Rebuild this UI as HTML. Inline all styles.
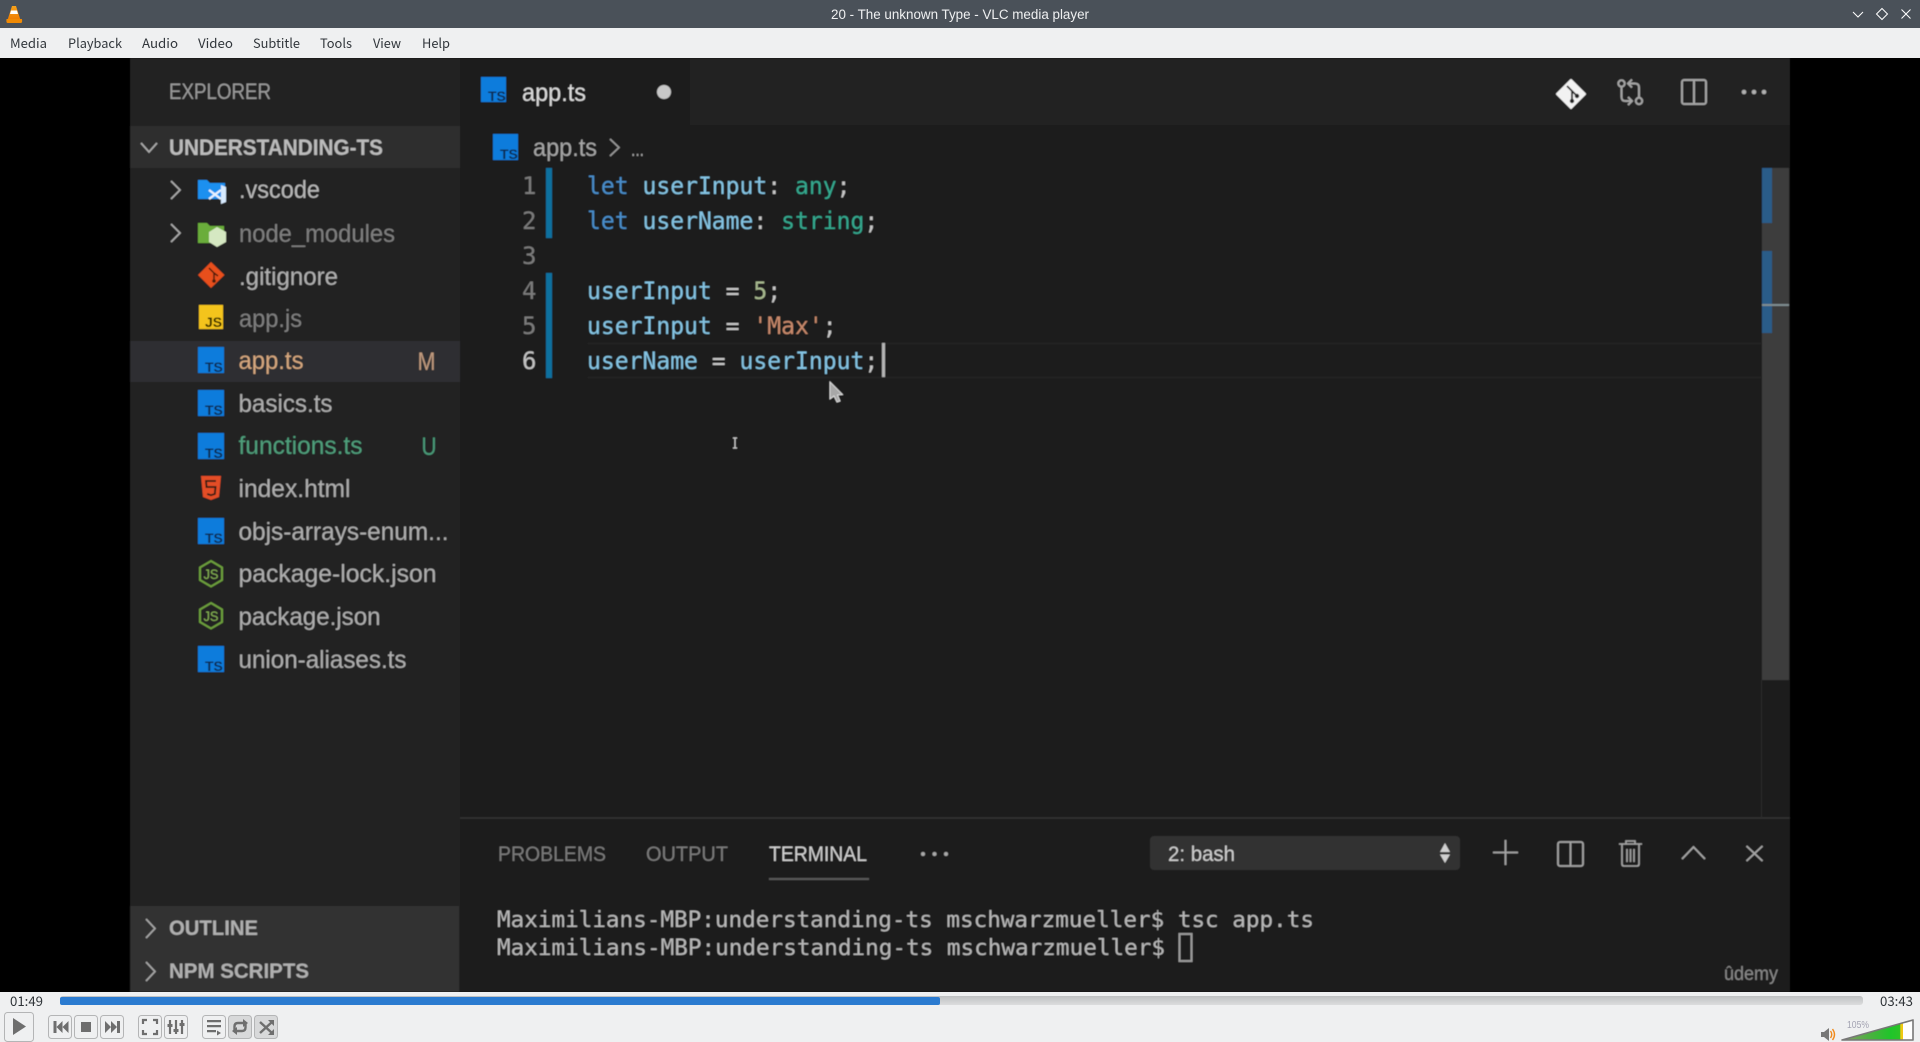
<!DOCTYPE html>
<html><head><meta charset="utf-8"><title>20 - The unknown Type - VLC media player</title>
<style>html,body{margin:0;padding:0;background:#eff0f1;width:1920px;height:1042px;overflow:hidden}svg{display:block}
.s{font-family:"Liberation Sans",sans-serif}.m{font-family:"DejaVu Sans Mono","Liberation Mono",monospace}.n{font-family:"Noto Sans CJK SC","Liberation Sans",sans-serif}</style></head>
<body>
<svg width="1920" height="1042" viewBox="0 0 1920 1042" xmlns="http://www.w3.org/2000/svg">
<defs>
<filter id="b" filterUnits="userSpaceOnUse" x="0" y="58" width="1920" height="934"><feGaussianBlur stdDeviation="0.6"/></filter>
<linearGradient id="seek" x1="0" y1="0" x2="0" y2="1"><stop offset="0" stop-color="#bfc1c2"/><stop offset="1" stop-color="#dcddde"/></linearGradient>
<linearGradient id="vol" x1="0" y1="0" x2="1" y2="0"><stop offset="0" stop-color="#8a9a6a"/><stop offset=".45" stop-color="#4cb040"/><stop offset=".8" stop-color="#1fc52a"/><stop offset=".95" stop-color="#2cc426"/><stop offset=".96" stop-color="#e8c818"/><stop offset="1" stop-color="#f2c810"/></linearGradient>
<linearGradient id="cone" x1="0" y1="0" x2="0" y2="1"><stop offset="0" stop-color="#f7a21b"/><stop offset="1" stop-color="#ef7c00"/></linearGradient>
</defs>
<rect width="1920" height="1042" fill="#eff0f1"/>
<rect width="1920" height="28" fill="#4a5159"/>
<!-- VLC cone -->
<path d="M12 6h4l4.500 14H7.500z" fill="url(#cone)"/><path d="M11 10.500h6l1 3.500H10z" fill="#fff"/><path d="M6.500 19h15.500q.5 4-1 4H7.500q-1.500 0-1-4z" fill="#f08a05"/>
<text class="s" x="831" y="19" font-size="13.500" fill="#eff0f1" textLength="258" lengthAdjust="spacingAndGlyphs">20 - The unknown Type - VLC media player</text>
<path d="M1853 12l5 5 5-5" fill="none" stroke="#fff" stroke-width="1"/>
<path d="M1882 8.500l5.500 5.500-5.500 5.500-5.500-5.500z" fill="none" stroke="#fff" stroke-width="1"/>
<path d="M1901.500 9.500l9 9M1910.500 9.500l-9 9" stroke="#fff" stroke-width="1"/>
<!-- Menu -->
<g class="n" font-size="13" fill="#31363b">
<text x="10" y="48" textLength="37" lengthAdjust="spacingAndGlyphs">Media</text>
<text x="68" y="48" textLength="54" lengthAdjust="spacingAndGlyphs">Playback</text>
<text x="142" y="48" textLength="36" lengthAdjust="spacingAndGlyphs">Audio</text>
<text x="198" y="48" textLength="35" lengthAdjust="spacingAndGlyphs">Video</text>
<text x="253" y="48" textLength="47" lengthAdjust="spacingAndGlyphs">Subtitle</text>
<text x="320" y="48" textLength="32" lengthAdjust="spacingAndGlyphs">Tools</text>
<text x="373" y="48" textLength="28" lengthAdjust="spacingAndGlyphs">View</text>
<text x="422" y="48" textLength="28" lengthAdjust="spacingAndGlyphs">Help</text>
</g>
<!-- Video -->
<rect x="0" y="58" width="1920" height="934" fill="#000"/>
<g filter="url(#b)">
<rect x="130" y="58" width="330" height="934" fill="#212121"/>
<rect x="460" y="58" width="1330" height="934" fill="#1c1c1c"/>
<rect x="460" y="58" width="1330" height="67" fill="#222"/>
<rect x="460" y="58" width="230" height="67" fill="#1c1c1c"/>
<rect x="130" y="126" width="330" height="42" fill="#2f2f2f"/>
<rect x="130" y="341" width="330" height="41" fill="#2d2d30"/>
<rect x="130" y="906" width="329" height="86" fill="#333"/>
<text class="s" x="169" y="99" font-size="22" fill="#9a9a9a" textLength="102" lengthAdjust="spacingAndGlyphs">EXPLORER</text>
<path d="M141 143l8 9 8-9" fill="none" stroke="#aaa" stroke-width="1.700"/>
<text class="s" x="169" y="155" font-size="22" font-weight="bold" fill="#bcbcbc" textLength="214" lengthAdjust="spacingAndGlyphs">UNDERSTANDING-TS</text>
<!-- Tree chevrons -->
<path d="M171 181l9 9-9 9M171 224l9 9-9 9" fill="none" stroke="#aaa" stroke-width="1.700"/>
<!-- vscode folder -->
<path d="M198 180h9l3 3h15v16h-27z" fill="#1c90f0"/><path d="M209 190l12 9M209 199l12-9" stroke="#e8f3ff" stroke-width="2.200" fill="none"/><path d="M221 185l5 2v15l-5 2z" fill="#d8ebff"/>
<text class="s" x="239" y="198" font-size="25" fill="#b8b8b8" textLength="81" lengthAdjust="spacingAndGlyphs">.vscode</text>
<!-- node folder -->
<path d="M198 223h9l3 3h14v17h-26z" fill="#6aad3a"/><path d="M217 227l9 5v10l-9 5-8-5v-10z" fill="#d5e8c2"/>
<text class="s" x="239" y="242" font-size="25" fill="#7f7f7f" textLength="156" lengthAdjust="spacingAndGlyphs">node_modules</text>
<!-- git -->
<path d="M211 262l13.500 13-13.500 13-13-13z" fill="#e8501e"/><path d="M209 268l5 5v7M214 273l4 3" stroke="#4a1a08" stroke-width="1.500" fill="none"/><circle cx="214" cy="281" r="1.800" fill="#4a1a08"/>
<text class="s" x="239" y="285" font-size="25" fill="#b0b0b0" textLength="99" lengthAdjust="spacingAndGlyphs">.gitignore</text>
<!-- js -->
<rect x="199" y="305" width="24" height="24" fill="#f4c41a"/><text class="s" x="205" y="327" font-size="14" font-weight="bold" fill="#2e2604">JS</text>
<text class="s" x="239" y="327" font-size="25" fill="#7f7f7f" textLength="63" lengthAdjust="spacingAndGlyphs">app.js</text>
<!-- ts rows -->
<g>
<rect x="198" y="347" width="26" height="26" fill="#0c7bdc"/><text class="s" x="205" y="372" font-size="14" font-weight="bold" fill="#0a2c50">TS</text>
<rect x="198" y="390" width="26" height="26" fill="#0c7bdc"/><text class="s" x="205" y="415" font-size="14" font-weight="bold" fill="#0a2c50">TS</text>
<rect x="198" y="433" width="26" height="26" fill="#0c7bdc"/><text class="s" x="205" y="458" font-size="14" font-weight="bold" fill="#0a2c50">TS</text>
<rect x="198" y="518" width="26" height="26" fill="#0c7bdc"/><text class="s" x="205" y="543" font-size="14" font-weight="bold" fill="#0a2c50">TS</text>
<rect x="198" y="646" width="26" height="26" fill="#0c7bdc"/><text class="s" x="205" y="671" font-size="14" font-weight="bold" fill="#0a2c50">TS</text>
</g>
<g class="s" font-size="25">
<text x="238.500" y="369" fill="#d6a77f" textLength="65" lengthAdjust="spacingAndGlyphs">app.ts</text>
<text x="417.500" y="370" fill="#c09a7e" textLength="18" lengthAdjust="spacingAndGlyphs">M</text>
<text x="238.500" y="412" fill="#aeaeae" textLength="94" lengthAdjust="spacingAndGlyphs">basics.ts</text>
<text x="238.500" y="454" fill="#4f9f7c" textLength="124" lengthAdjust="spacingAndGlyphs">functions.ts</text>
<text x="421.500" y="455" fill="#4a9a78" textLength="15" lengthAdjust="spacingAndGlyphs">U</text>
<text x="238.500" y="497" fill="#aeaeae" textLength="112" lengthAdjust="spacingAndGlyphs">index.html</text>
<text x="238.500" y="540" fill="#aeaeae" textLength="210" lengthAdjust="spacingAndGlyphs">objs-arrays-enum...</text>
<text x="238.500" y="582" fill="#aeaeae" textLength="198" lengthAdjust="spacingAndGlyphs">package-lock.json</text>
<text x="238.500" y="625" fill="#aeaeae" textLength="142" lengthAdjust="spacingAndGlyphs">package.json</text>
<text x="238.500" y="668" fill="#aeaeae" textLength="168" lengthAdjust="spacingAndGlyphs">union-aliases.ts</text>
</g>
<!-- html5 -->
<path d="M201 476h20l-2 21-8 3-8-3z" fill="#e44d26"/><path d="M216 481h-10l.5 6h9l-.7 7-3.800 1.200-3.800-1.200" fill="none" stroke="#2a1a12" stroke-width="1.800"/>
<!-- node json -->
<path d="M211 561l11 6.500v12.500l-11 6.500-11-6.500v-12.500z" fill="none" stroke="#6d9f3c" stroke-width="2"/><text class="s" x="203.500" y="579" font-size="13.500" fill="#86b354" textLength="15" lengthAdjust="spacingAndGlyphs">JS</text>
<path d="M211 603l11 6.500v12.500l-11 6.500-11-6.500v-12.500z" fill="none" stroke="#6d9f3c" stroke-width="2"/><text class="s" x="203.500" y="621" font-size="13.500" fill="#86b354" textLength="15" lengthAdjust="spacingAndGlyphs">JS</text>
<!-- outline -->
<path d="M146 919l9 9.500-9 9.500M146 962l9 9.500-9 9.500" fill="none" stroke="#a5a5a5" stroke-width="1.700"/>
<text class="s" x="169" y="935" font-size="21" font-weight="bold" fill="#b0b0b0" textLength="89" lengthAdjust="spacingAndGlyphs">OUTLINE</text>
<text class="s" x="169" y="978" font-size="21" font-weight="bold" fill="#b0b0b0" textLength="140" lengthAdjust="spacingAndGlyphs">NPM SCRIPTS</text>
<!-- Tab -->
<rect x="481" y="77" width="25" height="25" fill="#0c7bdc"/><text class="s" x="488" y="101" font-size="14" font-weight="bold" fill="#0a2c50">TS</text>
<text class="s" x="522" y="101" font-size="25" fill="#dcdcdc" textLength="64" lengthAdjust="spacingAndGlyphs">app.ts</text>
<circle cx="664" cy="92" r="7" fill="#c8c8c8"/>
<!-- top right icons -->
<path d="M1571 80l14 14-14 14-14-14z" fill="#f2f2f2" stroke="#f2f2f2" stroke-width="2" stroke-linejoin="round"/>
<path d="M1567 86l5 5v9M1572 91l5 5" stroke="#222" stroke-width="1.800" fill="none"/><circle cx="1572" cy="101" r="2.200" fill="#222"/><circle cx="1577" cy="96" r="2.200" fill="#222"/>
<g fill="none" stroke="#a4a4a4" stroke-width="2">
<circle cx="1621.500" cy="83.500" r="3.200"/><circle cx="1639" cy="101" r="3.200"/>
<path d="M1621.500 87v10q0 4 4 4h6M1628 97l4 4-4 4"/>
<path d="M1639 97.500v-10q0-4-4-4h-6M1632 79.500l-4 4 4 4"/>
<rect x="1682" y="80" width="24" height="24" rx="2"/><path d="M1694 80v24"/>
</g>
<circle cx="1744" cy="92" r="2.300" fill="#b0b0b0"/><circle cx="1754" cy="92" r="2.300" fill="#b0b0b0"/><circle cx="1764" cy="92" r="2.300" fill="#b0b0b0"/>
<!-- breadcrumb -->
<rect x="493" y="134" width="25" height="26" fill="#0c7bdc"/><text class="s" x="500" y="159" font-size="14" font-weight="bold" fill="#0a2c50">TS</text>
<text class="s" x="533" y="156" font-size="25" fill="#a6a6a6" textLength="64" lengthAdjust="spacingAndGlyphs">app.ts</text>
<path d="M610 139l9 8.500-9 8.500" fill="none" stroke="#9a9a9a" stroke-width="1.600"/>
<text class="s" x="631" y="156" font-size="20" fill="#a6a6a6" textLength="13" lengthAdjust="spacingAndGlyphs">...</text>
<!-- line highlight -->
<path d="M588 343.500H1761M588 377.500H1761" stroke="#282828" stroke-width="1.500"/>
<!-- gutter -->
<rect x="546" y="168" width="6" height="70" fill="#0c6f9e"/><rect x="546" y="273" width="6" height="105" fill="#0c6f9e"/>
<g class="m" font-size="24" fill="#7b7b7b">
<text x="522" y="194">1</text><text x="522" y="229">2</text><text x="522" y="264">3</text><text x="522" y="299">4</text><text x="522" y="334">5</text><text x="522" y="369" fill="#c4c4c4">6</text>
</g>
<g class="m" font-size="24" fill="#85c5e4" xml:space="preserve" transform="translate(587 0) scale(.96 1)">
<text x="0" y="194"><tspan fill="#4a8ecb">let</tspan> userInput<tspan fill="#c8c8c8">:</tspan> <tspan fill="#35a98f">any</tspan><tspan fill="#c8c8c8">;</tspan></text>
<text x="0" y="229"><tspan fill="#4a8ecb">let</tspan> userName<tspan fill="#c8c8c8">:</tspan> <tspan fill="#35a98f">string</tspan><tspan fill="#c8c8c8">;</tspan></text>
<text x="0" y="299">userInput <tspan fill="#c8c8c8">=</tspan> <tspan fill="#a8ba90">5</tspan><tspan fill="#c8c8c8">;</tspan></text>
<text x="0" y="334">userInput <tspan fill="#c8c8c8">=</tspan> <tspan fill="#c98a6c">'Max'</tspan><tspan fill="#c8c8c8">;</tspan></text>
<text x="0" y="369">userName <tspan fill="#c8c8c8">=</tspan> userInput<tspan fill="#c8c8c8">;</tspan></text>
</g>
<rect x="882" y="343" width="3" height="34" fill="#b4b4b4"/>
<path d="M830 382v17l4-3 3 6 3-1-2.500-6 5-.5z" fill="#a8a8a8" stroke="#eee" stroke-width=".8"/>
<path d="M733 438h4M735 438v10M733 448h4" stroke="#ccc" stroke-width="1.200"/>
<!-- scrollbar -->
<rect x="1762" y="168" width="27" height="512" fill="#3e3e3e"/>
<rect x="1762" y="168" width="10" height="55" fill="#2a5c88"/><rect x="1762" y="251" width="10" height="82" fill="#2a5c88"/>
<rect x="1762" y="304" width="27" height="2" fill="#7f8c8f"/>
<rect x="1761" y="680" width="1" height="138" fill="#2a2a2a"/>
<!-- panel -->
<rect x="460" y="818" width="1330" height="174" fill="#1a1a1a"/>
<rect x="460" y="817" width="1330" height="2" fill="#2e2e2e"/>
<g class="s" font-size="21">
<text x="498" y="861" fill="#7a7a7a" textLength="108" lengthAdjust="spacingAndGlyphs">PROBLEMS</text>
<text x="646" y="861" fill="#7a7a7a" textLength="82" lengthAdjust="spacingAndGlyphs">OUTPUT</text>
<text x="769" y="861" fill="#d0d0d0" textLength="98" lengthAdjust="spacingAndGlyphs">TERMINAL</text>
</g>
<rect x="769" y="878" width="100" height="2" fill="#5a5a5a"/>
<circle cx="923" cy="854" r="2" fill="#aaa"/><circle cx="934.500" cy="854" r="2" fill="#aaa"/><circle cx="946" cy="854" r="2" fill="#aaa"/>
<rect x="1150" y="836" width="310" height="34" rx="4" fill="#333"/>
<text class="s" x="1168" y="861" font-size="21" fill="#cfcfcf" textLength="67" lengthAdjust="spacingAndGlyphs">2: bash</text>
<path d="M1445 843l5 9h-10zM1445 863l5-8.500h-10z" fill="#d0d0d0"/>
<g fill="none" stroke="#a6a6a6" stroke-width="1.800">
<path d="M1493 852.500h25M1505.500 840v25"/>
<rect x="1558" y="842" width="25" height="24" rx="2"/><path d="M1570.500 842v24"/>
<path d="M1619 844h23M1626 844v-3h9v3M1622 844v20q0 2 2 2h13q2 0 2-2v-20M1627 849v13M1630.500 849v13M1634 849v13" stroke-width="1.600"/>
<path d="M1682 859l11.500-12 11.500 12"/>
<path d="M1746.500 846l16 15M1762.500 846l-16 15"/>
</g>
<g class="m" fill="#b8b8b8" font-size="22.500">
<text x="497" y="927" textLength="817" lengthAdjust="spacingAndGlyphs">Maximilians-MBP:understanding-ts mschwarzmueller$ tsc app.ts</text>
<text x="497" y="955" textLength="668" lengthAdjust="spacingAndGlyphs">Maximilians-MBP:understanding-ts mschwarzmueller$</text>
</g>
<rect x="1179.500" y="934" width="12" height="27" fill="none" stroke="#999" stroke-width="2"/>
<text class="s" x="1724" y="980" font-size="19" fill="#8a8a8a" textLength="54" lengthAdjust="spacingAndGlyphs">ûdemy</text>
</g>
<!-- Controls -->
<rect x="0" y="992" width="1920" height="50" fill="#eff0f1"/>
<text class="n" x="10" y="1006" font-size="13" fill="#2f3438" textLength="33" lengthAdjust="spacingAndGlyphs">01:49</text>
<text class="n" x="1880" y="1006" font-size="13" fill="#2f3438" textLength="33" lengthAdjust="spacingAndGlyphs">03:43</text>
<rect x="60" y="996" width="1803" height="9" rx="3" fill="url(#seek)"/>
<rect x="60" y="997" width="880" height="8" rx="2" fill="#2b7bd0"/>
<!-- Buttons -->
<g fill="none" stroke="#b4b5b6">
<rect x="4.500" y="1012.500" width="29" height="29" rx="3"/>
<rect x="48.500" y="1015.500" width="23" height="23" rx="3"/><rect x="74.500" y="1015.500" width="23" height="23" rx="3"/><rect x="100.500" y="1015.500" width="23" height="23" rx="3"/>
<rect x="138.500" y="1015.500" width="23" height="23" rx="3"/><rect x="164.500" y="1015.500" width="23" height="23" rx="3"/>
<rect x="202.500" y="1015.500" width="23" height="23" rx="3"/>
<rect x="228.500" y="1015.500" width="23" height="23" rx="3" fill="#d8d9da"/><rect x="254.500" y="1015.500" width="23" height="23" rx="3" fill="#d8d9da"/>
</g>
<g fill="#6e6e6e">
<path d="M13 1018l13 8.500-13 8.500z"/>
<path d="M53.500 1021h3v12h-3zM56.500 1027l6-6v12zM62.500 1027l6-6v12z"/>
<rect x="81" y="1022" width="10" height="10"/>
<path d="M105 1021l6 6-6 6zM111 1021l6 6-6 6zM117 1021h3v12h-3z"/>
</g>
<g fill="none" stroke="#6e6e6e" stroke-width="2.200">
<path d="M143 1024v-4h4M157 1024v-4h-4M143 1030v4h4M157 1030v4h-4"/>
<path d="M170 1020v14M176 1020v14M182 1020v14"/>
</g>
<g fill="#6e6e6e"><rect x="167.500" y="1024" width="5" height="3"/><rect x="173.500" y="1029" width="5" height="3"/><rect x="179.500" y="1023" width="5" height="3"/>
<path d="M207 1020h14v2.200h-14zM207 1025h14v2.200h-14zM207 1030h9v2.200h-9zM217 1030.500l4 2.500-4 2.500z"/></g>
<g fill="none" stroke="#6e6e6e" stroke-width="2.400">
<path d="M234.500 1030v-3.500q0-3.500 3.500-3.500h6"/>
<path d="M245.500 1024v3.500q0 3.500-3.500 3.500h-6"/>
<path d="M260 1022l12 11M260 1033l12-11"/>
</g>
<g fill="#6e6e6e"><path d="M243 1019l5 4-5 4zM237 1027l-5 4 5 4zM268 1020h6v6zM268 1035h6v-6z"/></g>
<!-- Volume -->
<path d="M1821 1032h3l5-4v13l-5-4h-3z" fill="#777"/>
<path d="M1830.500 1031q2.500 3.500 0 7M1832.500 1029q4 5.500 0 11" fill="none" stroke="#f08a1c" stroke-width="1.400"/>
<text class="s" x="1847" y="1028" font-size="10" fill="#a3a3b2" textLength="22" lengthAdjust="spacingAndGlyphs">105%</text>
<path d="M1842 1040L1913 1020v20z" fill="#fff"/>
<path d="M1842 1040L1903 1023v17z" fill="url(#vol)"/>
<path d="M1842 1040L1913 1020v20z" fill="none" stroke="#777" stroke-width="1.600" stroke-linejoin="round"/>
</svg>
</body></html>
